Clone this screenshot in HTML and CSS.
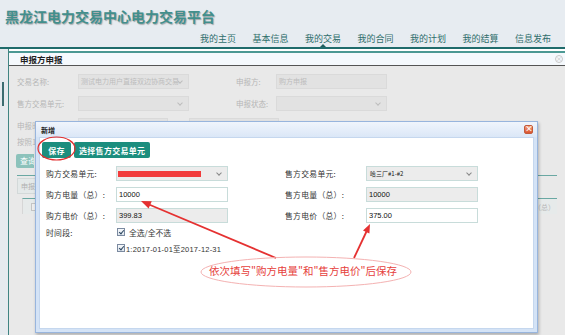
FILE: index.html
```html
<!DOCTYPE html>
<html lang="zh-CN">
<head>
  <meta charset="UTF-8" />
  <title>黑龙江电力交易中心电力交易平台</title>
  <link rel="stylesheet" href="styles.css">
</head>
<body>
  <div class="page">
    <div class="top">
      <div class="logo">黑龙江电力交易中心电力交易平台</div>
      <ul class="nav">
        <li>我的主页</li>
        <li>基本信息</li>
        <li class="on">我的交易</li>
        <li>我的合同</li>
        <li>我的计划</li>
        <li>我的结算</li>
        <li>信息发布</li>
      </ul>
    </div>

    <div class="main">
      <div class="rail"><span class="rail-bar"></span></div>
      <div class="panel">
        <div class="panel-head">
          <span>申报方申报</span>
          <span class="panel-close">×</span>
        </div>
        <div class="panel-body">
          <div class="q-row">
            <span class="q-label">交易名称:</span>
            <span class="q-field q-sel">测试电力用户直接双边协商交易<i class="chev"></i></span>
            <span class="q-label q-label2">申报方:</span>
            <span class="q-field">购方申报</span>
          </div>
          <div class="q-row">
            <span class="q-label">售方交易单元:</span>
            <span class="q-field q-sel"><i class="chev"></i></span>
            <span class="q-label q-label2">申报状态:</span>
            <span class="q-field q-sel"><i class="chev"></i></span>
          </div>
          <div class="q-row q-last">
            <span class="q-label">申报时</span>
            <span class="q-field q-date"></span>
            <span class="q-dash"></span>
            <span class="q-field q-date"></span>
          </div>
          <div class="q-note">按照1元/兆瓦时申报</div>
          <div class="q-btn">查询</div>
          <div class="tabs"><span class="tab">申报</span></div>
          <div class="grid">
            <div class="grid-head">
              <span class="grid-check"></span>
              <span class="grid-title">售方电价（总）</span>
            </div>
          </div>
        </div>
      </div>
    </div>

    <div class="modal">
      <div class="modal-head">
        <span>新增</span>
        <span class="modal-close">×</span>
      </div>
      <div class="modal-body">
        <div class="toolbar">
          <button class="btn">保存</button>
          <button class="btn">选择售方交易单元</button>
        </div>
        <div class="form">
          <div class="f-row">
            <span class="f-label">购方交易单元:</span>
            <span class="f-input f-ro f-sel"><span class="redact"></span><i class="chev"></i></span>
            <span class="f-label f-label2">售方交易单元:</span>
            <span class="f-input f-sel f-small">哈三厂#1-#2<i class="chev"></i></span>
          </div>
          <div class="f-row">
            <span class="f-label">购方电量（总）:</span>
            <span class="f-input">10000</span>
            <span class="f-label f-label2">售方电量（总）:</span>
            <span class="f-input f-ro">10000</span>
          </div>
          <div class="f-row">
            <span class="f-label">购方电价（总）:</span>
            <span class="f-input f-ro">399.83</span>
            <span class="f-label f-label2">售方电价（总）:</span>
            <span class="f-input">375.00</span>
          </div>
          <div class="f-row f-check-row">
            <span class="f-label">时间段:</span>
            <span class="cb"></span>
            <span class="cb-text">全选/全不选</span>
          </div>
          <div class="f-row f-check-row">
            <span class="f-label"></span>
            <span class="cb"></span>
            <span class="cb-text cb-date">1:2017-01-01至2017-12-31</span>
          </div>
        </div>
      </div>
    </div>

    <svg class="marks" width="565" height="335" viewBox="0 0 565 335">
      <ellipse cx="56.5" cy="148.5" rx="18.5" ry="11.5" fill="none" stroke="#e23030" stroke-width="1.2"/>
      <line x1="276" y1="258" x2="149" y2="204.5" stroke="#e53131" stroke-width="1.8"/>
      <polygon points="141,201 151.8,201.2 148.6,208.6" fill="#e53131"/>
      <line x1="354" y1="258" x2="366.5" y2="231.5" stroke="#e53131" stroke-width="1.8"/>
      <polygon points="370,224 369.4,233.6 363,230.6" fill="#e53131"/>
      <ellipse cx="306" cy="272" rx="105" ry="15" fill="none" stroke="#f4b2b2" stroke-width="1"/>
    </svg>
    <div class="callout">依次填写"购方电量"和"售方电价"后保存</div>
  </div>
</body>
</html>
```

FILE: styles.css
```css
* {
  box-sizing: border-box;
}

body {
  margin: 0;
  font-family: "Noto Sans CJK SC", "DejaVu Sans", sans-serif;
  font-size: 8px;
  color: #333;
  background: #e9e9e9;
}

.page {
  position: relative;
  width: 565px;
  height: 335px;
  overflow: hidden;
  background: #e9e9e9;
}

/* Bandeau du haut */
.top {
  height: 49px;
  background: #e7ecf1;
  border-bottom: 2px solid #1f6b6b;
  display: flex;
  flex-direction: column;
  justify-content: space-between;
  padding: 6px 0 0 5px;
}

.logo {
  font-size: 14px;
  line-height: 20px;
  font-weight: bold;
  color: #428f8c;
  text-shadow: 1px 1px 1px rgba(60, 60, 60, 0.4);
}

.nav {
  list-style: none;
  margin: 0;
  padding: 0 14px 0 0;
  display: flex;
  justify-content: flex-end;
  gap: 16.5px;
}

.nav li {
  position: relative;
  font-size: 9px;
  line-height: 12px;
  height: 14px;
  color: #2f6e6c;
}

.nav li.on::after {
  content: "";
  position: absolute;
  left: 15px;
  bottom: 0;
  border-left: 3px solid transparent;
  border-right: 3px solid transparent;
  border-bottom: 3px solid #1f5e5e;
}

/* Corps de page */
.main {
  display: flex;
  height: 286px;
}

.rail {
  width: 8px;
  background: #e5eaee;
  padding: 33px 0 0 2px;
}

.rail-bar {
  display: block;
  width: 2px;
  height: 24px;
  background: #3b6c70;
}

.panel {
  flex: 1;
  background: #fff;
  padding-top: 2px;
  border-left: 1px solid #3f8482;
  display: flex;
  flex-direction: column;
}

.panel-head {
  height: 15px;
  border-top: 2px solid #4c9994;
  border-bottom: 1px solid #555;
  background: #f5f9fd;
  padding: 0 2px 0 11px;
  display: flex;
  align-items: center;
  justify-content: space-between;
  font-size: 8.5px;
  font-weight: bold;
  color: #1f1f1f;
}

.panel-close {
  width: 8px;
  height: 8px;
  border: 1px solid #c8c8c8;
  border-radius: 50%;
  font-size: 6px;
  line-height: 6px;
  text-align: center;
  font-weight: normal;
  color: #bbb;
}

.panel-body {
  flex: 1;
  background: #e9e9e9;
  padding: 8px 8px 0 8px;
}

.q-row {
  display: flex;
  align-items: center;
  height: 15px;
  margin-bottom: 7px;
}

.q-last {
  margin-bottom: 3px;
}

.q-label {
  width: 61px;
  color: #b6b6b6;
  font-size: 7.5px;
}

.q-label2 {
  width: 40px;
  margin-left: 47px;
}

.q-field {
  position: relative;
  width: 111px;
  height: 15px;
  background: #e2e2e2;
  border: 1px solid #dadada;
  color: #bcbcbc;
  font-size: 7px;
  line-height: 13px;
  padding-left: 2px;
}

.q-sel .chev {
  border-color: #bdbdbd;
}

.q-date {
  width: 90px;
}

.q-dash {
  width: 21px;
}

/* Le reste du texte est caché sous la fenêtre */
.q-note {
  width: 18px;
  height: 12px;
  overflow: hidden;
  white-space: nowrap;
  color: #b6b6b6;
  font-size: 7.5px;
  line-height: 12px;
  margin-bottom: 6px;
}

.q-btn {
  width: 18px;
  height: 14px;
  margin-left: -1px;
  overflow: hidden;
  white-space: nowrap;
  background: #8cc2bb;
  color: #fff;
  font-size: 8px;
  line-height: 14px;
  padding-left: 4px;
  border-radius: 2px 0 0 2px;
}

.tabs {
  margin-top: 7px;
  height: 18px;
  border-top: 1px solid #6aa8a3;
  padding: 2px 0 0 0;
}

.tab {
  display: inline-block;
  width: 22px;
  height: 16px;
  border: 1px solid #d3d9d9;
  background: #e4e9e9;
  color: #b0b0b0;
  font-size: 7px;
  line-height: 14px;
  padding-left: 3px;
}

.grid {
  margin: 5px 0 0 5px;
  border-top: 1px solid #6aa8a3;
  border-left: 1px solid #d6d6d6;
}

.grid-head {
  height: 15px;
  background: #e6eaea;
  display: flex;
  align-items: center;
  justify-content: space-between;
  padding: 0 2px 0 8px;
}

.grid-check {
  width: 8px;
  height: 8px;
  border: 1px solid #c4c4c4;
  background: #eee;
}

.grid-title {
  color: #b8b8b8;
  font-size: 7px;
}

/* Fenêtre modale */
.modal {
  position: absolute;
  left: 35px;
  top: 121px;
  width: 503px;
  height: 212px;
  border: 1px solid #98b5dd;
  background: #d4e3f6;
  box-shadow: 1px 2px 3px rgba(0, 0, 0, 0.25);
  display: flex;
  flex-direction: column;
}

.modal-head {
  height: 15px;
  background: linear-gradient(#f0f5fc, #dbe7f7);
  display: flex;
  align-items: center;
  justify-content: space-between;
  padding: 0 4px 0 5px;
  font-size: 7px;
  font-weight: bold;
  color: #222;
}

.modal-close {
  width: 9px;
  height: 9px;
  border-radius: 2px;
  background: linear-gradient(#f4a07a, #d9532f);
  border: 1px solid #c25a3c;
  color: #fff;
  font-size: 8px;
  line-height: 6px;
  text-align: center;
}

.modal-body {
  flex: 1;
  margin: 0 3px 3px 3px;
  background: #fff;
  border: 1px solid #c5d7ee;
  padding: 4px 0 0 2px;
}

.toolbar {
  display: flex;
  gap: 3px;
}

.btn {
  height: 16px;
  border: none;
  border-radius: 2px;
  background: #1c8e7e;
  color: #fff;
  font-family: inherit;
  font-size: 8px;
  font-weight: bold;
  padding: 0 5px;
  letter-spacing: 0.3px;
}

.btn:first-child {
  width: 29px;
}

.form {
  margin-top: 8px;
  padding-left: 4px;
}

.f-row {
  display: flex;
  align-items: center;
  height: 15px;
  margin-bottom: 6px;
}

.f-label {
  width: 70px;
  font-size: 7.8px;
  letter-spacing: 0.3px;
  color: #333;
}

.f-label2 {
  width: 81px;
  margin-left: 57px;
}

.f-input {
  position: relative;
  width: 112px;
  height: 15px;
  border: 1px solid #c8dcda;
  background: #fff;
  font-family: "Liberation Sans", Arial, sans-serif;
  font-size: 7.5px;
  line-height: 13px;
  padding-left: 2px;
  color: #111;
}

.f-ro {
  background: #ececec;
}

.f-sel {
  background: #ececec;
}

.f-small {
  font-family: "Noto Sans CJK SC", sans-serif;
  font-size: 6px;
  padding-left: 3px;
}

.redact {
  position: absolute;
  left: 1px;
  top: 4px;
  width: 83px;
  height: 6px;
  background: #f23b3b;
}

.chev {
  position: absolute;
  right: 6px;
  top: 4px;
  width: 4px;
  height: 4px;
  border-right: 1px solid #888;
  border-bottom: 1px solid #888;
  transform: rotate(45deg);
}

.f-check-row {
  height: 10px;
}

.f-check-row:nth-child(4) {
  margin-top: -2px;
}

.cb {
  width: 8px;
  height: 8px;
  border: 1px solid #7b8aa0;
  background: linear-gradient(#f6f8fb, #dfe6ee);
  position: relative;
  margin-left: 1px;
}

.cb::after {
  content: "";
  position: absolute;
  left: 2px;
  top: 0;
  width: 2px;
  height: 4px;
  border-right: 1.5px solid #2c4660;
  border-bottom: 1.5px solid #2c4660;
  transform: rotate(40deg);
}

.cb-text {
  margin-left: 4px;
  font-size: 7.8px;
  color: #333;
}

.cb-date {
  margin-left: 1px;
  font-family: "Liberation Sans", "Noto Sans CJK SC", sans-serif;
  font-size: 7.5px;
  letter-spacing: 0.2px;
}

/* Annotations */
.marks {
  position: absolute;
  left: 0;
  top: 0;
  pointer-events: none;
}

.callout {
  position: absolute;
  left: 209px;
  top: 263px;
  font-size: 10.5px;
  line-height: 16px;
  color: #e6413c;
  white-space: nowrap;
}
```
